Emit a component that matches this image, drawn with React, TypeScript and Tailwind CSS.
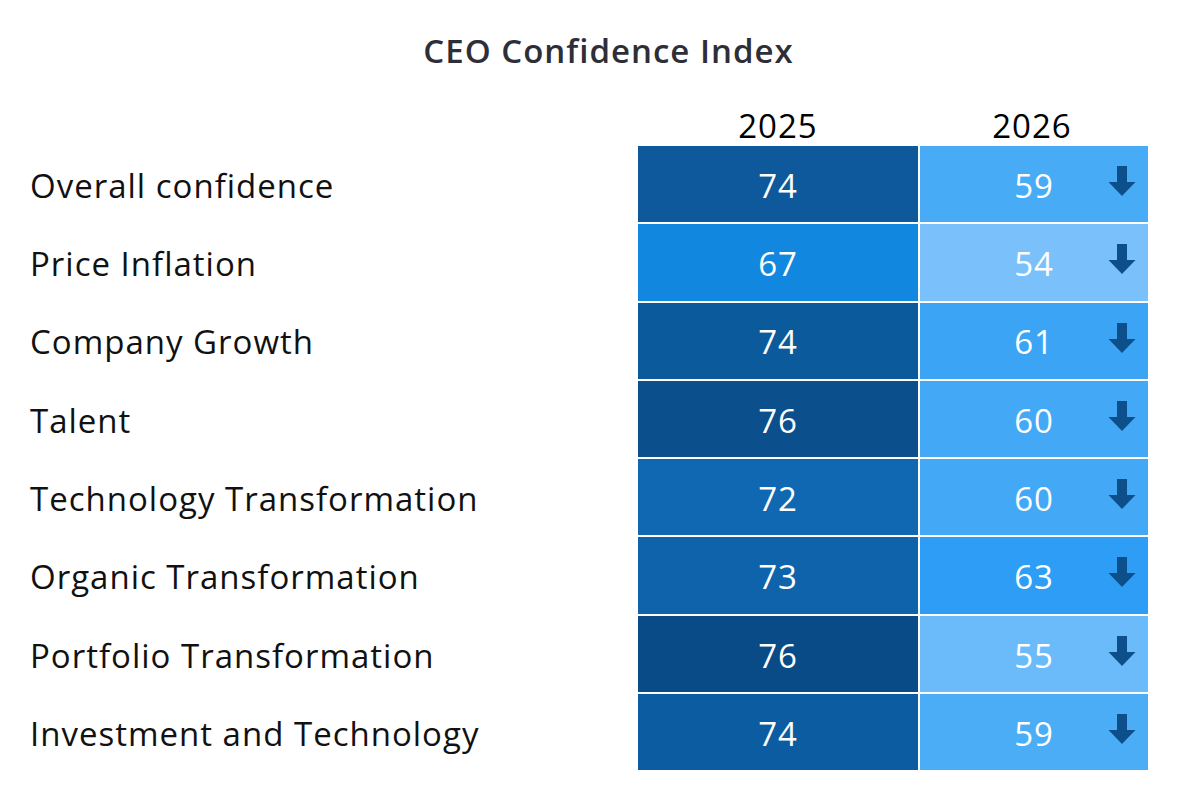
const rows = [
  { label: "Overall confidence", a: 74, b: 59, ca: "bg-[#0e599b]", cb: "bg-[#47abf6]" },
  { label: "Price Inflation", a: 67, b: 54, ca: "bg-[#1287e0]", cb: "bg-[#7ac1fb]" },
  { label: "Company Growth", a: 74, b: 61, ca: "bg-[#0b5a9c]", cb: "bg-[#3ba4f5]" },
  { label: "Talent", a: 76, b: 60, ca: "bg-[#0b4f8c]", cb: "bg-[#43a8f6]" },
  { label: "Technology Transformation", a: 72, b: 60, ca: "bg-[#1068b3]", cb: "bg-[#43a8f6]" },
  { label: "Organic Transformation", a: 73, b: 63, ca: "bg-[#0f63ab]", cb: "bg-[#2d9df5]" },
  { label: "Portfolio Transformation", a: 76, b: 55, ca: "bg-[#084b86]", cb: "bg-[#6bbbfa]" },
  { label: "Investment and Technology", a: 74, b: 59, ca: "bg-[#0b5ca0]", cb: "bg-[#4badf6]" },
];

const DownArrow = () => (
  <svg width="28" height="30" viewBox="0 0 28 30">
    <path d="M9 0 H19 V16 H27.5 L14 30 L0.5 16 H9 Z" fill="#0d4f8a" />
  </svg>
);

export default function App() {
  return (
    <div className="h-[804px] w-[1179px] bg-white font-['Open_Sans',sans-serif]">
      <div className="flex h-[100px] items-center justify-center pl-[38px] pt-[2px]">
        <h1 className="text-[33px] font-semibold tracking-[1px] text-[#2e2e38]">CEO Confidence Index</h1>
      </div>
      <div className="grid grid-cols-[636px_280px_228px] gap-x-[2px] gap-y-[2px]">
        <div />
        <div className="flex h-[44px] items-end justify-center pb-[2px] text-[33px] leading-none tracking-[1px] text-black">2025</div>
        <div className="flex h-[44px] items-end justify-center pb-[2px] pr-[4px] text-[33px] leading-none tracking-[1px] text-black">2026</div>
        {rows.map((r) => (
          <>
            <div key={r.label + "l"} className="flex h-[76.3px] items-center pl-[30px] pt-[3px] text-[33px] tracking-[1px] text-[#111111]">
              {r.label}
            </div>
            <div key={r.label + "a"} className={`flex h-[76.3px] items-center justify-center pt-[3px] text-[33px] tracking-[1px] text-white ${r.ca}`}>
              {r.a}
            </div>
            <div key={r.label + "b"} className={`relative flex h-[76.3px] items-center justify-center pt-[3px] text-[33px] tracking-[1px] text-white ${r.cb}`}>
              <span>{r.b}</span>
              <div className="absolute right-[12px] top-[20px]">
                <DownArrow />
              </div>
            </div>
          </>
        ))}
      </div>
    </div>
  );
}
